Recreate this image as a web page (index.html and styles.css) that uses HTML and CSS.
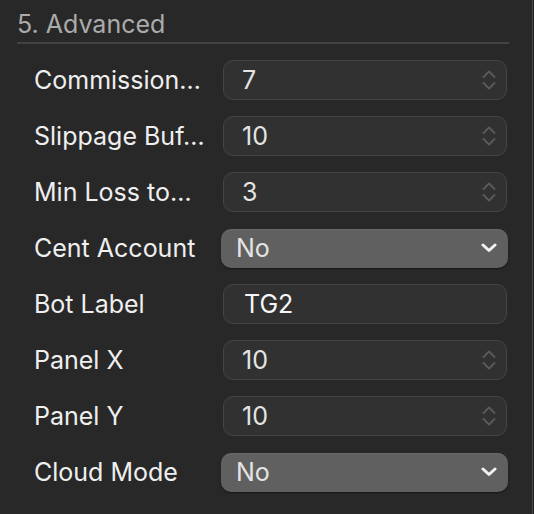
FILE: index.html
```html
<!DOCTYPE html>
<html>
<head>
<meta charset="utf-8">
<link rel="stylesheet" href="styles.css">
</head>
<body>
<div class="panel">
  <div class="section-title">5. Advanced</div>
  <div class="form">
    <div class="label">Commission…</div>
    <div class="field stepper"><span class="value">7</span>
      <svg class="step-icon" width="14" height="22" viewBox="0 0 14 22"><path d="M1.5 8 L7 2.5 L12.5 8 M1.5 14 L7 19.5 L12.5 14" fill="none" stroke="#595959" stroke-width="2" stroke-linecap="round" stroke-linejoin="round"/></svg>
    </div>

    <div class="label">Slippage Buf…</div>
    <div class="field stepper"><span class="value">10</span>
      <svg class="step-icon" width="14" height="22" viewBox="0 0 14 22"><path d="M1.5 8 L7 2.5 L12.5 8 M1.5 14 L7 19.5 L12.5 14" fill="none" stroke="#595959" stroke-width="2" stroke-linecap="round" stroke-linejoin="round"/></svg>
    </div>

    <div class="label">Min Loss to…</div>
    <div class="field stepper"><span class="value">3</span>
      <svg class="step-icon" width="14" height="22" viewBox="0 0 14 22"><path d="M1.5 8 L7 2.5 L12.5 8 M1.5 14 L7 19.5 L12.5 14" fill="none" stroke="#595959" stroke-width="2" stroke-linecap="round" stroke-linejoin="round"/></svg>
    </div>

    <div class="label">Cent Account</div>
    <div class="dropdown"><span class="value">No</span>
      <svg class="drop-icon" width="16" height="10" viewBox="0 0 16 10"><path d="M2 2 L8 7.5 L14 2" fill="none" stroke="#f2f2f2" stroke-width="3" stroke-linecap="round" stroke-linejoin="round"/></svg>
    </div>

    <div class="label">Bot Label</div>
    <div class="field text"><span class="value bright">TG2</span></div>

    <div class="label">Panel X</div>
    <div class="field stepper"><span class="value">10</span>
      <svg class="step-icon" width="14" height="22" viewBox="0 0 14 22"><path d="M1.5 8 L7 2.5 L12.5 8 M1.5 14 L7 19.5 L12.5 14" fill="none" stroke="#595959" stroke-width="2" stroke-linecap="round" stroke-linejoin="round"/></svg>
    </div>

    <div class="label">Panel Y</div>
    <div class="field stepper"><span class="value">10</span>
      <svg class="step-icon" width="14" height="22" viewBox="0 0 14 22"><path d="M1.5 8 L7 2.5 L12.5 8 M1.5 14 L7 19.5 L12.5 14" fill="none" stroke="#595959" stroke-width="2" stroke-linecap="round" stroke-linejoin="round"/></svg>
    </div>

    <div class="label">Cloud Mode</div>
    <div class="dropdown"><span class="value">No</span>
      <svg class="drop-icon" width="16" height="10" viewBox="0 0 16 10"><path d="M2 2 L8 7.5 L14 2" fill="none" stroke="#f2f2f2" stroke-width="3" stroke-linecap="round" stroke-linejoin="round"/></svg>
    </div>
  </div>
</div>
</body>
</html>
```

FILE: styles.css
```css
html, body {
  margin: 0;
  padding: 0;
}
body {
  background: #1f1f1f;
  width: 534px;
  height: 514px;
  overflow: hidden;
  font-family: Inter, "Liberation Sans", Arial, sans-serif;
}
.panel {
  width: 532px;
  height: 514px;
  background: #282828;
  border-right: 1px solid #474747;
}
.section-title {
  margin-left: 17px;
  width: 492px;
  padding-top: 9px;
  padding-bottom: 3px;
  line-height: 30px;
  font-size: 25px;
  color: #ababab;
  border-bottom: 2px solid #434343;
}
.form {
  margin-top: 8px;
  padding-left: 34px;
  display: grid;
  grid-template-columns: 187px 288px;
  grid-auto-rows: 56px;
  align-items: center;
}
.label {
  font-size: 25px;
  color: #efefef;
  white-space: nowrap;
  line-height: 30px;
}
.field {
  box-sizing: border-box;
  height: 40px;
  margin: 0 2px 0 2px;
  background: #313131;
  border: 1px solid #454545;
  border-radius: 10px;
  display: flex;
  align-items: center;
  justify-content: space-between;
  padding: 0 10px 0 18px;
}
.field.text {
  padding-left: 20px;
}
.value {
  font-size: 25px;
  line-height: 30px;
  color: #e4e4e4;
}
.value.bright {
  color: #f6f6f6;
}
.step-icon {
  display: block;
}
.dropdown {
  box-sizing: border-box;
  height: 39px;
  margin-right: 1px;
  background: #606060;
  border-radius: 10px;
  box-shadow: 0 1px 1.5px rgba(0, 0, 0, 0.45), inset 0 1px 0 rgba(255, 255, 255, 0.06);
  display: flex;
  align-items: center;
  justify-content: space-between;
  padding: 0 11px 0 15px;
}
.drop-icon {
  display: block;
}
```
